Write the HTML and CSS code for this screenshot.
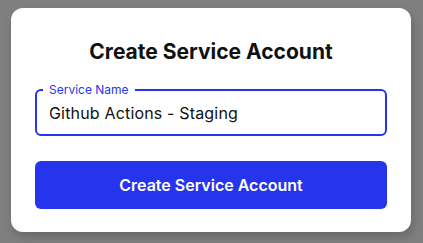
FILE: index.html
```html
<!DOCTYPE html>
<html>
  <head>
    <meta charset="UTF-8" />
    <meta name="viewport" content="width=device-width, initial-scale=1" />
    <link rel="stylesheet" href="styles.css">
  </head>
  <body>
    <div class="card">
      <h1 class="title">Create Service Account</h1>
      <fieldset class="field">
        <legend class="field-label">Service Name</legend>
        <input
          spellcheck="false"
          type="text"
          class="field-input"
          value="Github Actions - Staging"
        />
      </fieldset>
      <button class="submit">Create Service Account</button>
    </div>
  </body>
</html>
```

FILE: styles.css
```css
:root {
  --blue: #2535ee;
}

* {
  box-sizing: border-box;
  font-family: Inter, "Noto Sans", sans-serif;
}
body {
  margin: 0px;
  padding: 8px 0 0 11px;
  background-color: #7f7f7f;
  width: 423px;
  height: 243px;
  overflow: hidden;
}

.card {
  width: 400px;
  height: 224px;
  padding: 32px 24px 23px;
  background-color: white;
  border-radius: 12px;
  box-shadow: 2px 5px 10px rgba(0, 0, 0, 0.18);
  display: flex;
  flex-direction: column;
}

.title {
  margin: 0px;
  font-size: 21px;
  line-height: 24px;
  font-weight: 700;
  text-align: center;
  color: #111;
}

.field {
  margin: 19px 0 0;
  padding: 4px 12px 9px;
  border: 2px solid var(--blue);
  border-radius: 6px;
  min-width: 0;
}
.field-label {
  margin-left: -6px;
  padding: 0 6px;
  font-size: 12px;
  line-height: 14px;
  color: var(--blue);
}
.field-input {
  display: block;
  width: 100%;
  height: 24px;
  padding: 0;
  border: none;
  outline: none;
  font-size: 16px;
  letter-spacing: 0.17px;
  color: #111;
  background: transparent;
}

.submit {
  margin-top: 25px;
  height: 48px;
  border: none;
  border-radius: 6px;
  background-color: var(--blue);
  color: white;
  font-size: 16px;
  font-weight: 600;
  cursor: pointer;
}
```
